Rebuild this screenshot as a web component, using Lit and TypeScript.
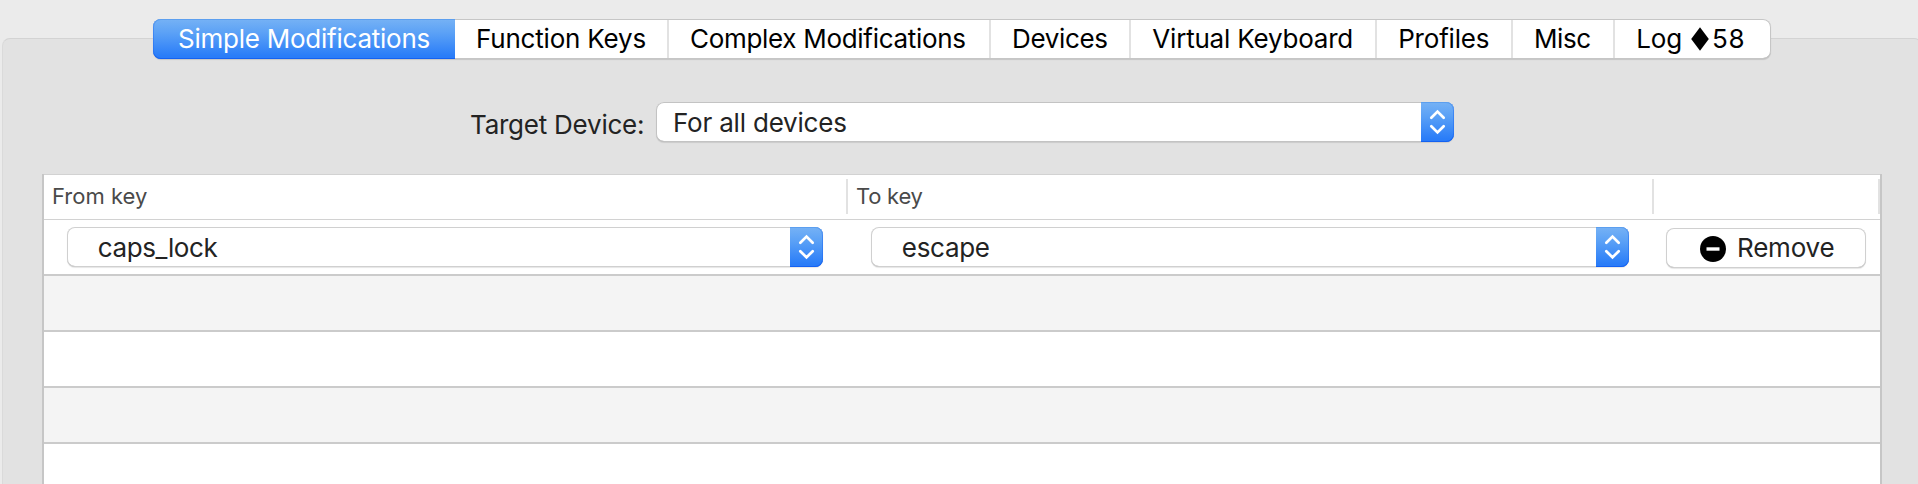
import { LitElement, html, css } from "lit";
import { customElement, property } from "lit/decorators.js";
import { classMap } from "lit/directives/class-map.js";
import { styleMap } from "lit/directives/style-map.js";

interface Tab {
  label: string;
  width: number;
  inset: number;
  tracking: number;
  count?: number;
}

const TABS: Tab[] = [
  { label: "Simple Modifications", width: 302, inset: 25, tracking: -0.24 },
  { label: "Function Keys", width: 214, inset: 21, tracking: -0.2 },
  { label: "Complex Modifications", width: 322, inset: 21, tracking: -0.3 },
  { label: "Devices", width: 140, inset: 21, tracking: -0.33 },
  { label: "Virtual Keyboard", width: 246, inset: 21.3, tracking: -0.2 },
  { label: "Profiles", width: 136, inset: 21.2, tracking: -0.2 },
  { label: "Misc", width: 102, inset: 21, tracking: -0.4 },
  { label: "Log", width: 156, inset: 21.3, tracking: -0.15, count: 58 },
];

@customElement("popup-button")
export class PopupButton extends LitElement {
  @property() value = "";

  static styles = css`
    :host {
      display: flex;
      box-sizing: border-box;
      height: 40px;
      border-radius: 8px;
      background: #fff;
      box-shadow: inset 0 0 0 1px var(--edge, #c3c3c3), inset 0 -1px 0 var(--edge-bottom, #a9a9a9),
        0 1px 1px rgba(0, 0, 0, 0.1);
      color: #232323;
    }
    .value {
      flex: 1;
      padding-left: var(--value-inset, 17px);
      line-height: 42px;
      white-space: nowrap;
    }
    .stepper {
      display: flex;
      align-items: center;
      justify-content: center;
      width: 33px;
      height: 40px;
      border-radius: 0 8px 8px 0;
      background: linear-gradient(#76b2f5, #5ba1f6 35%, #2a7df8 92%, #2a7bf8);
      box-shadow: inset 0 1px 0 #5c9fef, inset 0 -1px 0 #1462f2, inset -1px 0 0 rgba(24, 100, 240, 0.45);
    }
    svg {
      display: block;
    }
  `;

  render() {
    return html`
      <span class="value">${this.value}</span>
      <span class="stepper">
        <svg width="33" height="40" viewBox="0 0 33 40" fill="none" stroke="#fff" stroke-width="2.7"
          stroke-linecap="round" stroke-linejoin="miter">
          <path d="M10.3 15.8 16.5 9.6 22.7 15.8" />
          <path d="M10.3 24.2 16.5 30.4 22.7 24.2" />
        </svg>
      </span>
    `;
  }
}

@customElement("app-root")
export class AppRoot extends LitElement {
  static styles = css`
    :host {
      display: block;
      height: 484px;
      overflow: hidden;
      background: #ebebeb;
      font: 26px/40px Inter, "Liberation Sans", sans-serif;
      color: #000;
    }
    .window {
      display: flex;
      flex-direction: column;
      box-sizing: border-box;
      width: 1922px;
      height: 484px;
      padding: 19px 0 0 2px;
    }
    .tabs {
      position: relative;
      z-index: 1;
      display: flex;
      flex: none;
      width: 1618px;
      height: 40px;
      margin-left: 151px;
      border-radius: 8px;
      background: #fff;
      box-shadow: inset 0 0 0 1px #c6c6c6, inset 0 -1px 0 #a5a5a5, 0 1px 1px rgba(0, 0, 0, 0.13);
    }
    .tab {
      display: flex;
      flex: none;
      box-sizing: border-box;
      height: 40px;
      white-space: pre;
      background: linear-gradient(#e2e2e2, #e2e2e2) right 1px / 2px 38px no-repeat;
    }
    .tab:last-child {
      background: none;
    }
    .tab.active {
      color: #fff;
      border-radius: 8px 0 0 8px;
      background: linear-gradient(#76b2f5, #5ba1f6 35%, #2a7df8 92%, #2a7bf8);
      box-shadow: inset 0 1px 0 #5c9fef, inset 0 -1px 0 #1462f2, inset 1px 0 0 rgba(24, 100, 240, 0.4);
    }
    .diamond {
      flex: none;
      margin: 8px 3px 0 9px;
    }
    .count {
      letter-spacing: 0.5px;
    }
    .panel {
      flex: 1;
      margin-top: -21px;
      box-sizing: border-box;
      border: 1px solid #d3d3d3;
      border-left-color: #dadada;
      border-bottom: 0;
      border-radius: 8px 8px 0 0;
      background: #e2e2e2;
      padding: 63px 0 0 39px;
    }
    .target {
      display: flex;
      height: 40px;
      margin-left: 427px;
      letter-spacing: -0.2px;
    }
    .target-label {
      box-sizing: border-box;
      width: 187px;
      padding-left: 1px;
      line-height: 46px;
      color: #232323;
      letter-spacing: -0.24px;
    }
    .target popup-button {
      width: 798px;
    }
    .table {
      box-sizing: border-box;
      width: 1840px;
      height: 320px;
      margin-top: 32px;
      border: solid #c6c6c6;
      border-width: 0 2px;
      background: #fff;
    }
    .head {
      display: grid;
      grid-template-columns: 804px 806px 226px;
      box-sizing: border-box;
      height: 46px;
      border: solid #d2d2d2;
      border-width: 1px 0;
      font-size: 22px;
      color: #4a4a4a;
    }
    .head span {
      margin: 4px 0 5px;
      height: 35px;
      line-height: 35px;
      padding-left: 8px;
      border-right: 2px solid #e2e2e2;
    }
    .head .to {
      letter-spacing: -0.25px;
    }
    .row {
      display: flex;
      box-sizing: border-box;
      height: 56px;
      border-bottom: 2px solid #cbcbcb;
    }
    .row.odd {
      background: #f4f4f4;
    }
    .mapping {
      padding: 7px 0 0 23px;
      --value-inset: 30.8px;
      --edge: #d0d0d0;
      --edge-bottom: #b4b4b4;
      letter-spacing: -0.4px;
    }
    .mapping .from {
      width: 756px;
      margin-right: 48px;
    }
    .mapping .to {
      width: 758px;
      margin-right: 37px;
      letter-spacing: -0.3px;
    }
    .remove {
      display: flex;
      align-items: flex-start;
      box-sizing: border-box;
      width: 200px;
      height: 40px;
      margin: 1px 0 0;
      padding: 0 0 0 34px;
      gap: 11px;
      border: 0;
      border-radius: 8px;
      background: #fff;
      box-shadow: inset 0 0 0 1px #d0d0d0, inset 0 -1px 0 #b4b4b4, 0 1px 1px rgba(0, 0, 0, 0.1);
      font: inherit;
      color: #232323;
      letter-spacing: -0.2px;
    }
    .remove svg {
      flex: none;
      margin-top: 8px;
    }
  `;

  private renderTab(tab: Tab, index: number) {
    return html`<div
      class=${classMap({ tab: true, active: index === 0 })}
      style=${styleMap({
        width: `${tab.width}px`,
        paddingLeft: `${tab.inset}px`,
        letterSpacing: `${tab.tracking}px`,
      })}
    >${tab.label}${tab.count === undefined
      ? null
      : html`<svg class="diamond" width="18" height="24" viewBox="0 0 18 24"><path d="M9 .3 17.8 12 9 23.7.2 12Z" /></svg><span class="count">${tab.count}</span>`}</div>`;
  }

  render() {
    return html`
      <div class="window">
        <nav class="tabs">${TABS.map((tab, i) => this.renderTab(tab, i))}</nav>
        <main class="panel">
          <div class="target">
            <span class="target-label">Target Device:</span>
            <popup-button value="For all devices"></popup-button>
          </div>
          <section class="table">
            <div class="head"><span>From key</span><span class="to">To key</span><span></span></div>
            <div class="row mapping">
              <popup-button class="from" value="caps_lock"></popup-button>
              <popup-button class="to" value="escape"></popup-button>
              <button class="remove">
                <svg width="26" height="26" viewBox="0 0 26 26">
                  <circle cx="13" cy="13" r="13" />
                  <rect x="6.5" y="11.3" width="13" height="3.4" fill="#fff" />
                </svg>
                <span>Remove</span>
              </button>
            </div>
            <div class="row odd"></div>
            <div class="row"></div>
            <div class="row odd"></div>
            <div class="row"></div>
          </section>
        </main>
      </div>
    `;
  }
}
